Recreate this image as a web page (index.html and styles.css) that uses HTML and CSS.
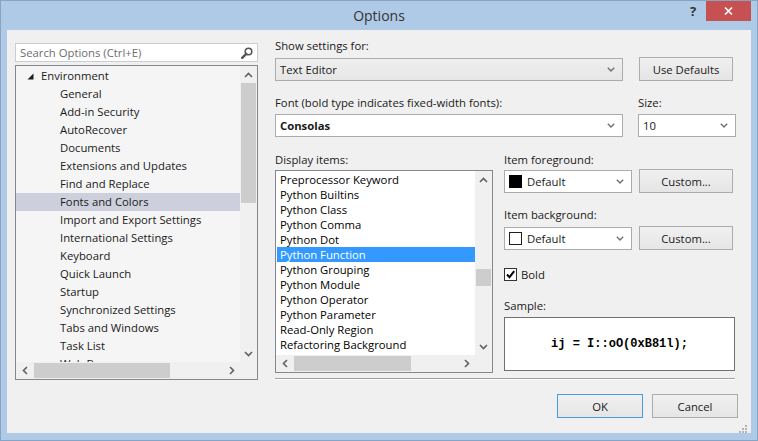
FILE: index.html
```html
<!DOCTYPE html>
<html>
<head>
<meta charset="utf-8">
<title>Options</title>
<link rel="stylesheet" href="styles.css">
</head>
<body>
<div class="window">
  <div class="titlebar">
    <div class="title">Options</div>
    <div class="controls">
      <div class="help">?</div>
      <div class="close"><svg width="9" height="8" viewBox="0 0 9 8"><path d="M1 0.5 L8 7.5 M8 0.5 L1 7.5" stroke="#fff" stroke-width="1.6" fill="none"/></svg></div>
    </div>
  </div>
  <div class="client">
    <div class="left">
      <div class="search">
        <span>Search Options (Ctrl+E)</span>
        <svg width="12" height="12" viewBox="0 0 12 12"><circle cx="7.5" cy="4.5" r="3.3" fill="none" stroke="#555" stroke-width="1.6"/><path d="M5.2 6.8 L1.2 10.8" stroke="#555" stroke-width="2.4" stroke-linecap="round"/></svg>
      </div>
      <div class="tree">
        <div class="tree-body">
          <div class="tree-items">
            <div class="tree-item root"><svg width="7" height="7" viewBox="0 0 7 7"><polygon points="6.5,0.5 6.5,6.5 0.5,6.5" fill="#1e1e1e"/></svg><span>Environment</span></div>
            <div class="tree-item">General</div>
            <div class="tree-item">Add-in Security</div>
            <div class="tree-item">AutoRecover</div>
            <div class="tree-item">Documents</div>
            <div class="tree-item">Extensions and Updates</div>
            <div class="tree-item">Find and Replace</div>
            <div class="tree-item sel">Fonts and Colors</div>
            <div class="tree-item">Import and Export Settings</div>
            <div class="tree-item">International Settings</div>
            <div class="tree-item">Keyboard</div>
            <div class="tree-item">Quick Launch</div>
            <div class="tree-item">Startup</div>
            <div class="tree-item">Synchronized Settings</div>
            <div class="tree-item">Tabs and Windows</div>
            <div class="tree-item">Task List</div>
            <div class="tree-item">Web Browser</div>
          </div>
          <div class="vscroll">
            <div class="arrow"><svg width="9" height="6" viewBox="0 0 9 6"><path d="M1 5 L4.5 1.5 L8 5" fill="none" stroke="#606060" stroke-width="1.6"/></svg></div>
            <div class="vthumb tree-vthumb"></div>
            <div class="fill"></div>
            <div class="arrow"><svg width="9" height="6" viewBox="0 0 9 6"><path d="M1 1 L4.5 4.5 L8 1" fill="none" stroke="#606060" stroke-width="1.6"/></svg></div>
          </div>
        </div>
        <div class="hscroll">
          <div class="arrow"><svg width="6" height="9" viewBox="0 0 6 9"><path d="M5 1 L1.5 4.5 L5 8" fill="none" stroke="#606060" stroke-width="1.6"/></svg></div>
          <div class="hthumb tree-hthumb"></div>
          <div class="fill"></div>
          <div class="arrow"><svg width="6" height="9" viewBox="0 0 6 9"><path d="M1 1 L4.5 4.5 L1 8" fill="none" stroke="#606060" stroke-width="1.6"/></svg></div>
          <div class="corner"></div>
        </div>
      </div>
    </div>

    <div class="right">
      <div class="label">Show settings for:</div>
      <div class="row1">
        <div class="combo ro wide"><span>Text Editor</span><svg width="8" height="5" viewBox="0 0 8 5"><path d="M0.8 0.8 L4 4 L7.2 0.8" fill="none" stroke="#707070" stroke-width="1.4"/></svg></div>
        <div class="btn defaults">Use Defaults</div>
      </div>
      <div class="row2">
        <div class="col-font">
          <div class="label">Font (bold type indicates fixed-width fonts):</div>
          <div class="combo wide"><span class="bold">Consolas</span><svg width="8" height="5" viewBox="0 0 8 5"><path d="M0.8 0.8 L4 4 L7.2 0.8" fill="none" stroke="#707070" stroke-width="1.4"/></svg></div>
        </div>
        <div class="col-size">
          <div class="label">Size:</div>
          <div class="combo"><span>10</span><svg width="8" height="5" viewBox="0 0 8 5"><path d="M0.8 0.8 L4 4 L7.2 0.8" fill="none" stroke="#707070" stroke-width="1.4"/></svg></div>
        </div>
      </div>
      <div class="row3">
        <div class="col-items">
          <div class="label">Display items:</div>
          <div class="dlist">
            <div class="dlist-body">
              <div class="dlist-items">
                <div class="ditem">Preprocessor Keyword</div>
                <div class="ditem">Python Builtins</div>
                <div class="ditem">Python Class</div>
                <div class="ditem">Python Comma</div>
                <div class="ditem">Python Dot</div>
                <div class="ditem sel">Python Function</div>
                <div class="ditem">Python Grouping</div>
                <div class="ditem">Python Module</div>
                <div class="ditem">Python Operator</div>
                <div class="ditem">Python Parameter</div>
                <div class="ditem">Read-Only Region</div>
                <div class="ditem">Refactoring Background</div>
              </div>
              <div class="vscroll">
                <div class="arrow"><svg width="9" height="6" viewBox="0 0 9 6"><path d="M1 5 L4.5 1.5 L8 5" fill="none" stroke="#606060" stroke-width="1.6"/></svg></div>
                <div class="vthumb list-vthumb"></div>
                <div class="fill"></div>
                <div class="arrow"><svg width="9" height="6" viewBox="0 0 9 6"><path d="M1 1 L4.5 4.5 L8 1" fill="none" stroke="#606060" stroke-width="1.6"/></svg></div>
              </div>
            </div>
            <div class="hscroll">
              <div class="arrow"><svg width="6" height="9" viewBox="0 0 6 9"><path d="M5 1 L1.5 4.5 L5 8" fill="none" stroke="#606060" stroke-width="1.6"/></svg></div>
              <div class="hthumb list-hthumb"></div>
              <div class="fill"></div>
              <div class="arrow"><svg width="6" height="9" viewBox="0 0 6 9"><path d="M1 1 L4.5 4.5 L1 8" fill="none" stroke="#606060" stroke-width="1.6"/></svg></div>
              <div class="corner"></div>
            </div>
          </div>
        </div>
        <div class="col-props">
          <div class="label">Item foreground:</div>
          <div class="prop-row first">
            <div class="combo color"><span class="swatch black"></span><span class="cname">Default</span><svg width="8" height="5" viewBox="0 0 8 5"><path d="M0.8 0.8 L4 4 L7.2 0.8" fill="none" stroke="#707070" stroke-width="1.4"/></svg></div>
            <div class="btn custom">Custom...</div>
          </div>
          <div class="label gap14">Item background:</div>
          <div class="prop-row">
            <div class="combo color"><span class="swatch white"></span><span class="cname">Default</span><svg width="8" height="5" viewBox="0 0 8 5"><path d="M0.8 0.8 L4 4 L7.2 0.8" fill="none" stroke="#707070" stroke-width="1.4"/></svg></div>
            <div class="btn custom">Custom...</div>
          </div>
          <div class="check-row">
            <span class="checkbox"><svg width="11" height="11" viewBox="0 0 11 11"><path d="M2 5.5 L4.5 8.2 L9.2 2.2" fill="none" stroke="#000" stroke-width="2"/></svg></span>
            <span>Bold</span>
          </div>
          <div class="label gap16">Sample:</div>
          <div class="sample"><span>ij = I::oO(0xB81l);</span></div>
        </div>
      </div>
      <div class="separator"></div>
      <div class="buttons">
        <div class="btn dlg default">OK</div>
        <div class="btn dlg">Cancel</div>
      </div>
    </div>
    <div class="grip">
      <svg width="10" height="10" viewBox="0 0 10 10" fill="#b4b4b4"><rect x="7" y="1" width="2" height="2"/><rect x="4" y="4" width="2" height="2"/><rect x="7" y="4" width="2" height="2"/><rect x="1" y="7" width="2" height="2"/><rect x="4" y="7" width="2" height="2"/><rect x="7" y="7" width="2" height="2"/></svg>
    </div>
  </div>
</div>
</body>
</html>
```
FILE: styles.css
```css
* { box-sizing: border-box; margin: 0; padding: 0; }
html, body { width: 758px; height: 441px; overflow: hidden; }
body {
  font-family: "Open Sans", "Noto Sans", sans-serif;
  font-size: 11.3px;
  color: #1a1a1a;
  background: #afcae6;
}
.window {
  width: 758px;
  height: 441px;
  border: 1px solid #88a4c4;
  background: #afcae6;
  display: flex;
  flex-direction: column;
}
.titlebar {
  height: 29px;
  flex: none;
  display: grid;
  grid-template-columns: 1fr auto 1fr;
  padding: 0 6px;
}
.title {
  grid-column: 2;
  font-size: 14px;
  line-height: 30px;
  color: #333;
}
.controls {
  grid-column: 3;
  justify-self: end;
  display: flex;
  align-items: flex-start;
}
.help {
  width: 26px;
  height: 20px;
  line-height: 20px;
  text-align: center;
  font-weight: bold;
  font-size: 13px;
  color: #333;
}
.close {
  width: 45px;
  height: 20px;
  background: #c75050;
  display: flex;
  align-items: center;
  justify-content: center;
}
.client {
  flex: 1;
  margin: 0 6px 7px;
  background: #f0f0f0;
  display: flex;
  align-items: flex-start;
  position: relative;
}
.left {
  margin-left: 8px;
  padding-top: 13px;
  width: 243px;
  display: flex;
  flex-direction: column;
}
.search {
  height: 19px;
  border: 1px solid #cbcdd6;
  background: #fff;
  display: flex;
  align-items: center;
  justify-content: space-between;
  padding: 0 4px 0 4px;
  color: #6d6d6d;
}
.tree {
  margin-top: 3px;
  height: 315px;
  border: 1px solid #828790;
  background: #f5f5f5;
  display: flex;
  flex-direction: column;
}
.tree-body {
  flex: 1;
  min-height: 0;
  display: flex;
}
.tree-items {
  flex: 1;
  overflow: hidden;
  padding-top: 1px;
}
.tree-item {
  height: 18px;
  line-height: 18px;
  padding-left: 44px;
  white-space: nowrap;
}
.tree-item.root {
  padding-left: 11px;
  display: flex;
  align-items: center;
}
.tree-item.root svg { margin-right: 7px; margin-top: 1px; }
.tree-item.sel { background: #cdd0dc; }

.vscroll {
  width: 17px;
  flex: none;
  background: #f0f0f0;
  display: flex;
  flex-direction: column;
}
.arrow {
  width: 17px;
  height: 17px;
  flex: none;
  display: flex;
  align-items: center;
  justify-content: center;
}
.fill { flex: 1; }
.vthumb {
  margin: 0 1px;
  background: #cdcdcd;
  flex: none;
}
.tree-vthumb { height: 120px; }
.list-vthumb { height: 17px; margin-top: 81px; }
.hscroll {
  height: 17px;
  flex: none;
  background: #f0f0f0;
  display: flex;
}
.hthumb {
  margin: 1px 0 1px 1px;
  background: #cdcdcd;
  flex: none;
}
.tree-hthumb { width: 136px; }
.list-hthumb { width: 117px; }
.corner { width: 17px; flex: none; background: #f0f0f0; }

.right {
  margin-left: 17px;
  width: 463px;
  padding-top: 8px;
  display: flex;
  flex-direction: column;
}
.label {
  height: 16px;
  line-height: 16px;
  white-space: nowrap;
}
.combo {
  height: 23px;
  border: 1px solid #acacac;
  background: #fff;
  display: flex;
  align-items: center;
  padding: 0 7px 0 4px;
  justify-content: space-between;
  white-space: nowrap;
}
.combo.ro { background: linear-gradient(#efefef, #e6e6e6); }
.combo.wide { width: 348px; }
.bold { font-weight: bold; }
.btn {
  height: 24px;
  border: 1px solid #acacac;
  background: linear-gradient(#f0f0f0, #e5e5e5);
  display: flex;
  align-items: center;
  justify-content: center;
  white-space: nowrap;
}
.row1 {
  margin-top: 3px;
  display: flex;
  align-items: flex-end;
}
.defaults { width: 94px; margin-left: 16px; }
.row2 {
  margin-top: 14px;
  display: flex;
}
.col-font { width: 348px; }
.col-font .combo, .col-size .combo { margin-top: 3px; }
.col-size { width: 98px; margin-left: 15px; }
.row3 {
  margin-top: 15px;
  display: flex;
  align-items: flex-start;
}
.col-items { width: 218px; }
.dlist {
  margin-top: 2px;
  height: 203px;
  border: 1px solid #828790;
  background: #fff;
  display: flex;
  flex-direction: column;
}
.dlist-body {
  flex: 1;
  min-height: 0;
  display: flex;
}
.dlist-items {
  flex: 1;
  overflow: hidden;
  padding-top: 1px;
}
.ditem {
  height: 15px;
  line-height: 15px;
  padding-left: 4px;
  white-space: nowrap;
  color: #000;
}
.ditem.sel {
  margin-left: 1px;
  padding-left: 3px;
  background: #3399ff;
  color: #fff;
}
.col-props {
  margin-left: 11px;
  width: 231px;
  display: flex;
  flex-direction: column;
}
.prop-row {
  margin-top: 3px;
  display: flex;
  align-items: flex-end;
}
.prop-row.first { margin-top: 1px; }
.combo.color { width: 128px; padding-left: 4px; justify-content: flex-start; }
.combo.color svg { margin-left: auto; }
.swatch {
  width: 13px;
  height: 13px;
  flex: none;
}
.swatch.black { background: #000; }
.swatch.white { background: #fff; border: 1px solid #1e1e1e; }
.cname { margin-left: 5px; }
.custom { width: 94px; margin-left: 7px; }
.gap14 { margin-top: 14px; }
.gap16 { margin-top: 16px; }
.check-row {
  margin-top: 16px;
  height: 16px;
  display: flex;
  align-items: center;
}
.checkbox {
  width: 13px;
  height: 13px;
  border: 1px solid #333;
  background: #fff;
  margin-right: 4px;
  display: flex;
  align-items: center;
  justify-content: center;
}
.sample {
  margin-top: 3px;
  height: 54px;
  border: 1px solid #707070;
  background: #fff;
  display: flex;
  align-items: center;
  justify-content: center;
  font-family: "Liberation Mono", "DejaVu Sans Mono", monospace;
  font-weight: bold;
  font-size: 12px;
  color: #000;
  white-space: pre;
}
.separator {
  margin-top: 5px;
  width: 460px;
  height: 2px;
  border-top: 1px solid #a0a0a0;
  border-bottom: 1px solid #ffffff;
}
.buttons {
  margin-top: 14px;
  display: flex;
  justify-content: flex-end;
  gap: 9px;
}
.dlg { width: 86px; }
.dlg.default { border-color: #4a9be6; }
.grip {
  position: absolute;
  right: 3px;
  bottom: 1px;
  width: 10px;
  height: 10px;
}
```
